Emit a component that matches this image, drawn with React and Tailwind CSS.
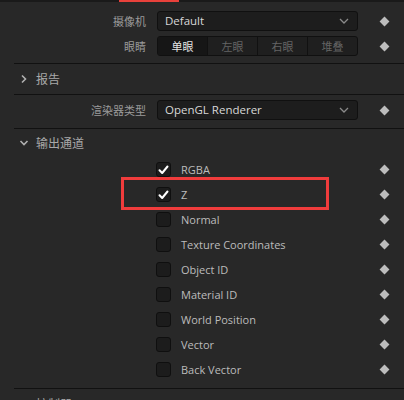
import React from "react";

const latin = { fontFamily: '"Open Sans", "Noto Sans CJK SC", sans-serif' };
const cjk = { fontFamily: '"Noto Sans CJK SC", "Open Sans", sans-serif' };

function Diamond() {
  return <div className="w-[7px] h-[7px] rotate-45 bg-[#bdbdbd] shrink-0" />;
}

function ChevronDown({ className = "" }) {
  return (
    <svg width="10" height="6" viewBox="0 0 10 6" className={className}>
      <path d="M1 1 L5 5 L9 1" fill="none" stroke="#8a8a8a" strokeWidth="1.3" />
    </svg>
  );
}

function Dropdown({ value }) {
  return (
    <div className="w-[201px] h-[20px] rounded-[3px] border border-[#101010] bg-[#1d1d1d] flex items-center pl-[7px] pr-[8px]">
      <span className="text-[11.5px] text-[#d8d8d8] flex-1 leading-none" style={latin}>{value}</span>
      <ChevronDown />
    </div>
  );
}

function Divider() {
  return <div className="ml-[14px] h-px bg-[#111111]" />;
}

function Chevron({ open }) {
  return open ? (
    <svg width="10" height="10" viewBox="0 0 10 10" className="mr-[7px]">
      <path d="M1.5 3 L5 6.5 L8.5 3" fill="none" stroke="#b0b0b0" strokeWidth="1.6" />
    </svg>
  ) : (
    <svg width="10" height="10" viewBox="0 0 10 10" className="mr-[7px]">
      <path d="M3 1.5 L6.5 5 L3 8.5" fill="none" stroke="#b0b0b0" strokeWidth="1.6" />
    </svg>
  );
}

function SectionHeader({ open, title, h = "h-[30px]" }) {
  return (
    <div className={h + " flex items-center pl-[19px]"}>
      <Chevron open={open} />
      <span className="text-[12px] text-[#a8a8a8] leading-none" style={cjk}>{title}</span>
    </div>
  );
}

function LabelRow({ label, children }) {
  return (
    <div className="flex items-center h-[20px]">
      <div className="w-[146px] text-right text-[11px] text-[#9a9a9a] leading-none" style={cjk}>{label}</div>
      <div className="ml-[11px]">{children}</div>
      <div className="ml-[23px]"><Diamond /></div>
    </div>
  );
}

function CheckRow({ label, checked }) {
  return (
    <div className="flex items-center h-[25px]">
      <div className="ml-[156px] w-[15px] h-[15px] rounded-[3px] border border-[#0f0f0f] bg-[#1c1c1c] flex items-center justify-center">
        {checked && (
          <svg width="11" height="10" viewBox="0 0 11 10">
            <path d="M1.5 5.2 L4.2 8 L9.5 1.5" fill="none" stroke="#ffffff" strokeWidth="2" strokeLinecap="round" strokeLinejoin="round" />
          </svg>
        )}
      </div>
      <span className="ml-[10px] text-[11px] text-[#bcbcbc] leading-none flex-1" style={latin}>{label}</span>
      <div className="mr-[16px]"><Diamond /></div>
    </div>
  );
}

export default function App() {
  const segs = ["单眼", "左眼", "右眼", "堆叠"];
  const channels = [
    ["RGBA", true],
    ["Z", true],
    ["Normal", false],
    ["Texture Coordinates", false],
    ["Object ID", false],
    ["Material ID", false],
    ["World Position", false],
    ["Vector", false],
    ["Back Vector", false],
  ];
  return (
    <div className="relative w-[404px] h-[400px] overflow-hidden bg-[#282828]">
      <div className="h-[2px] bg-[#1a1a1a] flex">
        <div className="ml-[119px] w-[60px] bg-[#e8413b]" />
      </div>
      <div className="mt-[9px]">
        <LabelRow label="摄像机"><Dropdown value="Default" /></LabelRow>
      </div>
      <div className="mt-[5px]">
        <LabelRow label="眼睛">
          <div className="w-[201px] h-[20px] rounded-[3px] border border-[#101010] bg-[#1f1f1f] flex overflow-hidden">
            {segs.map((s, i) => (
              <div
                key={s}
                className={
                  "flex-1 flex items-center justify-center text-[11px] leading-none " +
                  (i > 0 ? "border-l border-[#111111] " : "") +
                  (i === 0 ? "bg-[#161616] text-[#e4e4e4]" : "text-[#646464]")
                }
                style={cjk}
              >
                {s}
              </div>
            ))}
          </div>
        </LabelRow>
      </div>
      <div className="mt-[7px]"><Divider /></div>
      <SectionHeader title="报告" />
      <Divider />
      <div className="mt-[5px]">
        <LabelRow label="渲染器类型"><Dropdown value="OpenGL Renderer" /></LabelRow>
      </div>
      <div className="mt-[8px]"><Divider /></div>
      <SectionHeader open title="输出通道" h="h-[28px]" />
      {channels.map(([l, c]) => (
        <CheckRow key={l} label={l} checked={c} />
      ))}
      <div className="mt-[6px]"><Divider /></div>
      <SectionHeader open title="控制器" />
      <div className="absolute left-[121px] top-[177px] w-[208px] h-[33px] border-[3px] border-[#f03c3c]" />
    </div>
  );
}
